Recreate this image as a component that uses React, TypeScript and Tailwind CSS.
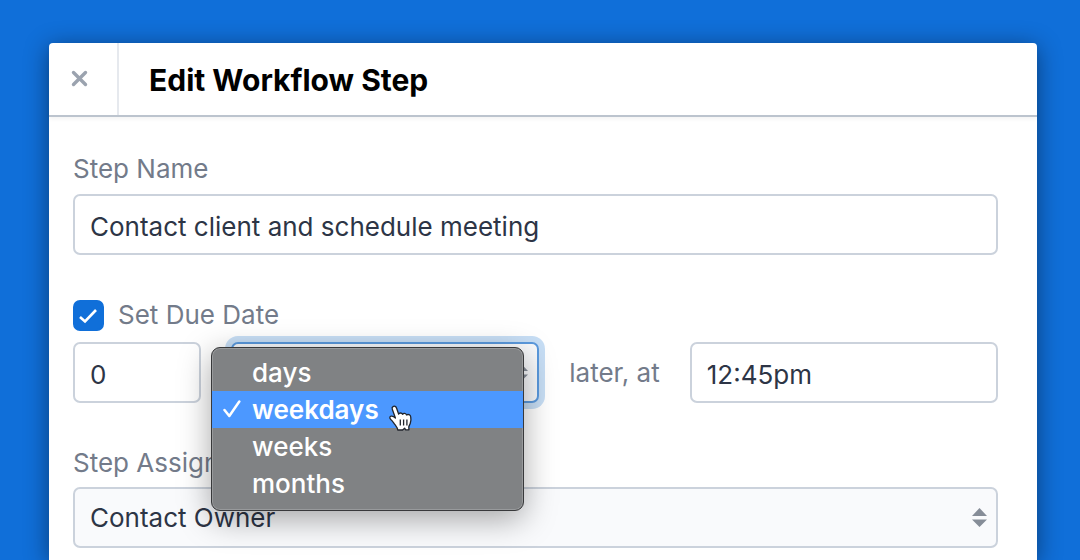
import React, { useState } from 'react';

const units = ['days', 'weekdays', 'weeks', 'months'];

const field = 'block h-[61px] w-full min-w-0 appearance-none rounded-[7px] border-2 border-[#cbd2dc] px-[15px] text-[26px] text-[#2d3546] outline-none';

const Sorter = () => (
    <svg className="pointer-events-none absolute right-[11px] top-[21px]" width="15" height="19" viewBox="0 0 15 19" fill="#868d98" aria-hidden="true">
        <path d="M7.5 0L15 8H0zM7.5 19L0 11.500H15z" />
    </svg>
);

const Check = ({ className }: { className: string }) => (
    <svg className={className} viewBox="0 0 18 15" fill="none" stroke="white" strokeWidth="2.6" aria-hidden="true">
        <path d="M1 8L6 12.500L17 1" />
    </svg>
);

const MenuCheck = () => (
    <svg className="absolute left-[11px] top-[9px]" width="18" height="18" viewBox="0 0 18 18" fill="none" stroke="white" strokeWidth="2.500" strokeLinecap="round" strokeLinejoin="round" aria-hidden="true">
        <path d="M1.500 10L6.300 16L16.300 1.500" />
    </svg>
);

const HandCursor = () => (
    <svg className="pointer-events-none absolute left-[176px] top-[56px]" width="26" height="28" viewBox="0 0 26 28" aria-hidden="true">
        <path
            d="M5 2.600C6.500 1.600 8 2.500 8.600 4.200L10.700 10.200C11 8.700 13.800 8.500 14.600 10.300C15.500 8.900 17.900 9.200 18.600 11C20 9.900 22.400 10.800 22.700 12.700C23.100 14.700 23 17 22.300 19.300C21.900 20.700 21 21.700 20.800 22.800L20.900 25.800H17.700L16.600 24.200L14.600 26H9.800C9.600 23.700 8.500 22.600 7.200 20.900C5.600 19 4.700 17.200 2.800 15.600C1.400 14.300 1.500 12.600 3 12.200C4.700 11.800 6 12.600 7.400 14L4.300 5.200C3.900 4.100 4.100 3.100 5 2.600Z"
            fill="white"
            stroke="#20242c"
            strokeWidth="1.300"
            strokeLinejoin="round"
        />
        <path d="M12.300 15.500V21.500M15.600 15.500V21.500M18.900 15.500V21.500" stroke="#20242c" strokeWidth="1.300" fill="none" />
    </svg>
);

const App = () => {
    const [name, setName] = useState('Contact client and schedule meeting');
    const [hasDueDate, setHasDueDate] = useState(true);
    const [amount, setAmount] = useState('0');
    const [unit, setUnit] = useState('weekdays');
    const [time, setTime] = useState('12:45pm');
    const [open, setOpen] = useState(true);

    const chooseUnit = (value: string) => {
        setUnit(value);
        setOpen(false);
    };

    return (
        <div className="flex min-h-screen flex-col bg-[#106fd9] pl-[49px] pr-[43px] pt-[43px] font-['Inter',sans-serif]">
            <main className="flex-1 rounded-t bg-white shadow-[0_4px_24px_rgba(0,0,0,0.45)]">
                <header className="flex h-[74px] items-stretch border-b-2 border-[#bcc4ce] shadow-[0_2px_4px_rgba(0,0,0,0.05)]">
                    <button type="button" aria-label="Close" className="flex w-[70px] items-center border-r-2 border-[#e6e9ee] pb-0.5 pl-[22px]">
                        <svg width="17" height="17" viewBox="0 0 17 17" stroke="#9ba3af" strokeWidth="3.400" strokeLinecap="round" aria-hidden="true">
                            <path d="M2.500 2.500L14.500 14.500M14.500 2.500L2.500 14.500" />
                        </svg>
                    </button>
                    <h1 className="flex items-center pl-[30px] pt-0.5 text-[30px] font-bold text-black">Edit Workflow Step</h1>
                </header>

                <form className="pb-3 pl-6 pr-[39px] pt-9 text-[26px] leading-8 text-[#737b8a]" onSubmit={(e) => e.preventDefault()}>
                    <label htmlFor="step-name" className="mb-[9px] block">Step Name</label>
                    <input id="step-name" type="text" className={`${field} bg-white pt-[3px]`} value={name} onChange={(e) => setName(e.target.value)} />

                    <div className="mb-[11px] mt-11 flex items-center gap-[14px]">
                        <span className="relative h-[31px] w-[31px]">
                            <input
                                id="due-date"
                                type="checkbox"
                                className="block h-full w-full appearance-none rounded-[7px] border-2 border-[#cbd2dc] checked:border-[#106fd9] checked:bg-[#106fd9]"
                                checked={hasDueDate}
                                onChange={(e) => setHasDueDate(e.target.checked)}
                            />
                            {hasDueDate && <Check className="pointer-events-none absolute left-[6px] top-[9px] h-[15px] w-[18px]" />}
                        </span>
                        <label htmlFor="due-date">Set Due Date</label>
                    </div>

                    <div className="flex items-center gap-[30px]">
                        <div className="w-32">
                            <input type="text" aria-label="Amount" className={`${field} bg-white pt-[3px]`} value={amount} onChange={(e) => setAmount(e.target.value)} />
                        </div>
                        <div className="relative flex-1">
                            <select
                                aria-label="Unit"
                                className="block h-[61px] w-full appearance-none rounded-[7px] border-2 border-[#5b9ade] bg-[#f9fafc] px-4 text-[26px] text-[#2d3546] shadow-[0_0_0_6px_#c7def5] outline-none"
                                value={unit}
                                onMouseDown={(e) => { e.preventDefault(); setOpen(!open); }}
                                onChange={(e) => setUnit(e.target.value)}
                            >
                                {units.map((item) => <option key={item}>{item}</option>)}
                            </select>
                            <Sorter />
                            {open && (
                                <div className="absolute -left-5 right-[15px] top-[5px] z-10 rounded-[9px] border border-[#38393b] bg-[#808284] pb-2 pt-[6px] text-white shadow-[inset_0_0_0_1px_#989a9c,0_8px_32px_rgba(0,0,0,0.35)]">
                                    {units.map((item) => (
                                        <button
                                            key={item}
                                            type="button"
                                            onClick={() => chooseUnit(item)}
                                            className={`relative flex h-[37px] w-full items-center pl-10 ${item === unit ? 'bg-[#4c98ff] font-semibold' : 'font-medium'}`}
                                        >
                                            {item === unit && <MenuCheck />}
                                            {item}
                                        </button>
                                    ))}
                                    <HandCursor />
                                </div>
                            )}
                        </div>
                        <label htmlFor="due-time">later, at</label>
                        <div className="flex-1">
                            <input id="due-time" type="text" className={`${field} bg-white pt-[3px]`} value={time} onChange={(e) => setTime(e.target.value)} />
                        </div>
                    </div>

                    <label htmlFor="assignee" className="mb-2 mt-11 block">Step Assignee</label>
                    <div className="relative">
                        <select id="assignee" className={`${field} bg-[#f9fafc]`}>
                            <option>Contact Owner</option>
                        </select>
                        <Sorter />
                    </div>
                </form>
            </main>
        </div>
    );
};

export default App;
